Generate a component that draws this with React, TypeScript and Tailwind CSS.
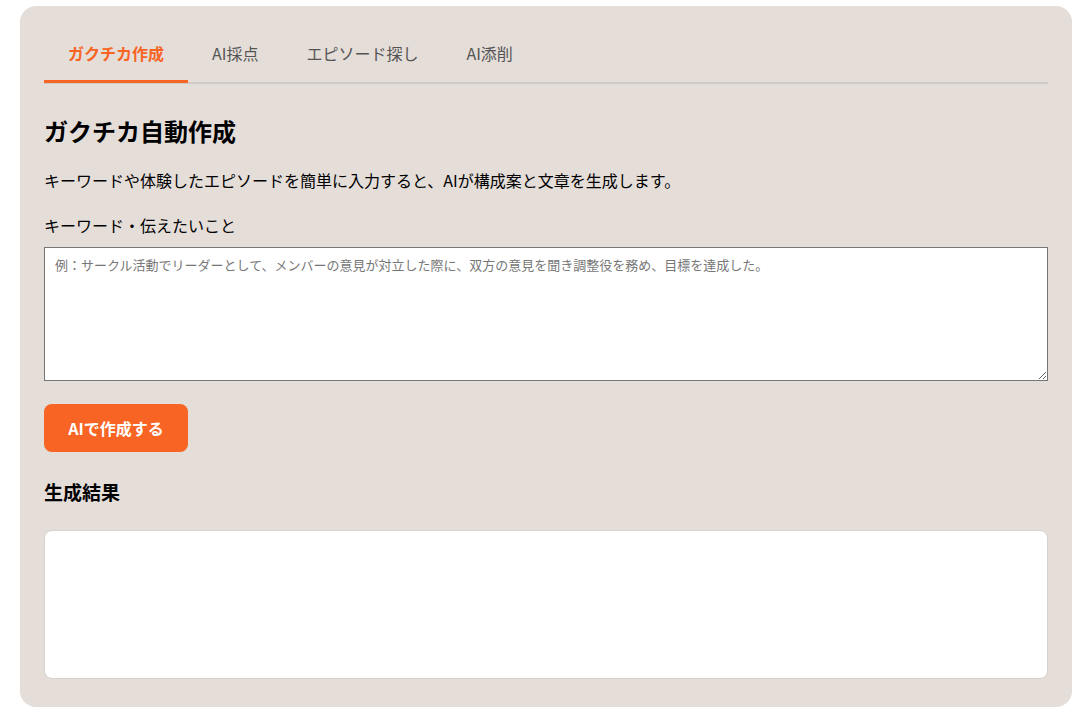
export default function App() {
  const tabs = ["ガクチカ作成", "AI採点", "エピソード探し", "AI添削"];
  return (
    <div className="w-[1081px] h-[717px] bg-white pt-[6px] pl-[20px]" style={{ fontFamily: '"Noto Sans CJK JP", "Noto Sans", sans-serif' }}>
      <div className="w-[1052px] h-[701px] bg-[#e4ddd8] rounded-[16px] px-[24px] pt-[28px]">
        <div className="flex border-b-2 border-[#cfcac6] h-[50px]">
          {tabs.map((t, i) => (
            <div key={t} className={`px-[24px] h-[49px] flex items-start pt-[7px] text-[16px] ${i === 0 ? "text-[#f76423] font-bold border-b-[3px] border-[#f76423]" : "text-[#555]"}`}>{t}</div>
          ))}
        </div>
        <h1 className="mt-[30px] text-[24px] font-bold text-black leading-[34px]">ガクチカ自動作成</h1>
        <p className="mt-[20px] text-[16px] text-black leading-[24px]">キーワードや体験したエピソードを簡単に入力すると、AIが構成案と文章を生成します。</p>
        <p className="mt-[21px] text-[16px] text-black leading-[24px]">キーワード・伝えたいこと</p>
        <textarea className="mt-[10px] block w-full h-[134px] bg-white border border-[#767676] px-[10px] py-[7px] text-[13px] text-[#333] placeholder:text-[#777] resize-y" placeholder="例：サークル活動でリーダーとして、メンバーの意見が対立した際に、双方の意見を聞き調整役を務め、目標を達成した。" />
        <button className="mt-[23px] w-[144px] h-[48px] bg-[#f76423] text-white font-bold text-[16px] rounded-[8px]">AIで作成する</button>
        <h2 className="mt-[27px] text-[19px] font-bold text-black leading-[26px]">生成結果</h2>
        <div className="mt-[25px] h-[149px] bg-white border border-[#d6d2cf] rounded-[8px]" />
      </div>
    </div>
  );
}
